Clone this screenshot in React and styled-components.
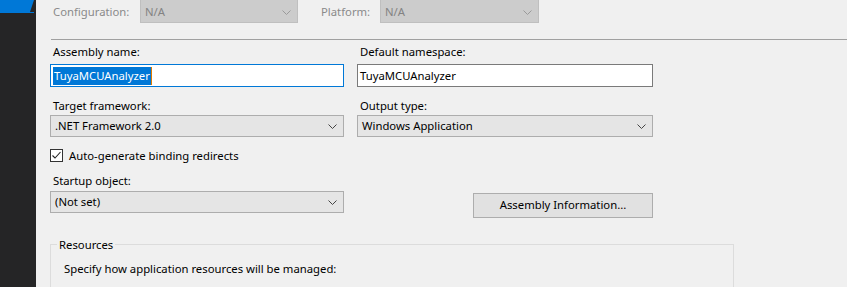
import React from "react";
import styled, { createGlobalStyle } from "styled-components";

const Global = createGlobalStyle`
  html, body { margin: 0; padding: 0; background: #f0f0f0; overflow: hidden; }
  body { font-family: "Noto Sans", "Open Sans", sans-serif; font-size: 11.3px; color: #000; }
  #root { width: 847px; height: 287px; }
`;

const Page = styled.div`
  display: flex;
  width: 847px;
  height: 287px;
  overflow: hidden;
`;

const Sidebar = styled.div`
  width: 36px;
  flex: none;
  background: #252526;
  display: flex;
  flex-direction: column;
  align-items: flex-start;
`;

const Tab = styled.div`
  position: relative;
  flex: none;
  height: 13px;
  width: 34px;
  background-color: #0078d7;
  &::after {
    content: "";
    position: absolute;
    right: 0;
    top: 0;
    width: 0;
    height: 0;
    border-bottom: 12px solid #252526;
    border-left: 4px solid transparent;
    bottom: 0;
  }
`;

const Main = styled.div`
  flex: 1;
  display: flex;
  flex-direction: column;
  padding-left: 14px;
  min-width: 0;
`;

const TopRow = styled.div`
  display: flex;
  align-items: center;
  height: 24px;
  margin-top: -1px;
`;

const TopLabel = styled.span`
  color: #8a8a8a;
  width: ${p => p.$w}px;
  padding-left: ${p => p.$pl || 3}px;
  padding-top: 2px;
  box-sizing: border-box;
  line-height: 16px;
`;

const Select = styled.div`
  box-sizing: border-box;
  width: ${p => p.$w}px;
  height: ${p => p.$h || 22}px;
  display: flex;
  align-items: center;
  justify-content: space-between;
  padding: ${p => p.$pt || 1}px 6px 0 4px;
  background: ${p => (p.$disabled ? "#cccccc" : "#e5e5e5")};
  border: 1px solid ${p => (p.$disabled ? "#bfbfbf" : "#adadad")};
  color: ${p => (p.$disabled ? "#838383" : "#000")};
  line-height: 16px;
`;

const Chevron = ({ disabled }) => (
  <svg width="9" height="5" viewBox="0 0 9 5">
    <polyline points="0.5,0.5 4.5,4.5 8.5,0.5" fill="none" stroke={disabled ? "#9a9a9a" : "#444"} strokeWidth="1" />
  </svg>
);

const Separator = styled.div`
  height: 1px;
  background: #a0a0a0;
  margin: 16px 0 0 1px;
`;

const Grid = styled.div`
  display: grid;
  grid-template-columns: 294px 296px;
  column-gap: 13px;
  align-items: start;
`;

const Field = styled.div`
  display: flex;
  flex-direction: column;
  margin-top: ${p => p.$mt || 0}px;
`;

const Label = styled.label`
  line-height: 16px;
  padding-left: 3px;
  margin-bottom: ${p => p.$mb || 0}px;
`;

const TextInput = styled.div`
  box-sizing: border-box;
  height: 23px;
  display: flex;
  align-items: center;
  padding: 1px 0 0 2px;
  background: #fff;
  border: 1px solid ${p => (p.$focused ? "#0078d7" : "#7a7a7a")};
  line-height: 16px;
`;

const Selected = styled.span`
  background: #0078d7;
  color: #fff;
  padding: 0 1px;
  line-height: 18px;
  border-right: 1px solid #e07b00;
`;

const CheckRow = styled.div`
  grid-column: 1 / span 2;
  display: flex;
  align-items: center;
  gap: 6px;
  margin-top: 11px;
  line-height: 16px;
`;

const Box = styled.span`
  box-sizing: border-box;
  width: 13px;
  height: 13px;
  border: 1px solid #333;
  background: #fff;
  display: flex;
  align-items: center;
  justify-content: center;
`;

const ButtonCell = styled.div`
  display: flex;
  justify-content: flex-end;
  margin-top: 29px;
`;

const Button = styled.div`
  box-sizing: border-box;
  width: 180px;
  height: 25px;
  display: flex;
  align-items: center;
  justify-content: center;
  background: #e1e1e1;
  border: 1px solid #adadad;
  line-height: 16px;
`;

const Group = styled.fieldset`
  box-sizing: border-box;
  width: 684px;
  margin: 19px 0 0 0;
  padding: 8px 0 0 0;
  border: 1px solid #dcdcdc;
  border-bottom: none;
  height: 60px;
`;

const Legend = styled.legend`
  padding: 0 2px;
  margin-left: 6px;
  line-height: 16px;
`;

const GroupText = styled.div`
  line-height: 16px;
  padding-left: 13px;
`;

export default function App() {
  return (
    <>
      <Global />
      <Page>
        <Sidebar>
          <Tab />
        </Sidebar>
        <Main>
          <TopRow>
            <TopLabel $w={90}>Configuration:</TopLabel>
            <Select $disabled $w={158} $h={24} $pt={2}>
              <span>N/A</span>
              <Chevron disabled />
            </Select>
            <TopLabel $w={82} $pl={23}>Platform:</TopLabel>
            <Select $disabled $w={159} $h={24} $pt={2}>
              <span>N/A</span>
              <Chevron disabled />
            </Select>
          </TopRow>
          <Separator />
          <Grid>
            <Field $mt={4}>
              <Label $mb={4}>Assembly name:</Label>
              <TextInput $focused>
                <Selected>TuyaMCUAnalyzer</Selected>
              </TextInput>
            </Field>
            <Field $mt={4}>
              <Label $mb={4}>Default namespace:</Label>
              <TextInput>TuyaMCUAnalyzer</TextInput>
            </Field>
            <Field $mt={11}>
              <Label $mb={1}>Target framework:</Label>
              <Select $w={294}>
                <span>.NET Framework 2.0</span>
                <Chevron />
              </Select>
            </Field>
            <Field $mt={11}>
              <Label $mb={1}>Output type:</Label>
              <Select $w={296}>
                <span>Windows Application</span>
                <Chevron />
              </Select>
            </Field>
            <CheckRow>
              <Box>
                <svg width="11" height="11" viewBox="0 0 11 11">
                  <polyline points="1.5,5.5 4,8 9.5,2" fill="none" stroke="#222" strokeWidth="1.1" />
                </svg>
              </Box>
              <span>Auto-generate binding redirects</span>
            </CheckRow>
            <Field $mt={9}>
              <Label $mb={2}>Startup object:</Label>
              <Select $w={294}>
                <span>(Not set)</span>
                <Chevron />
              </Select>
            </Field>
            <ButtonCell>
              <Button>Assembly Information...</Button>
            </ButtonCell>
          </Grid>
          <Group>
            <Legend>Resources</Legend>
            <GroupText>Specify how application resources will be managed:</GroupText>
          </Group>
        </Main>
      </Page>
    </>
  );
}
